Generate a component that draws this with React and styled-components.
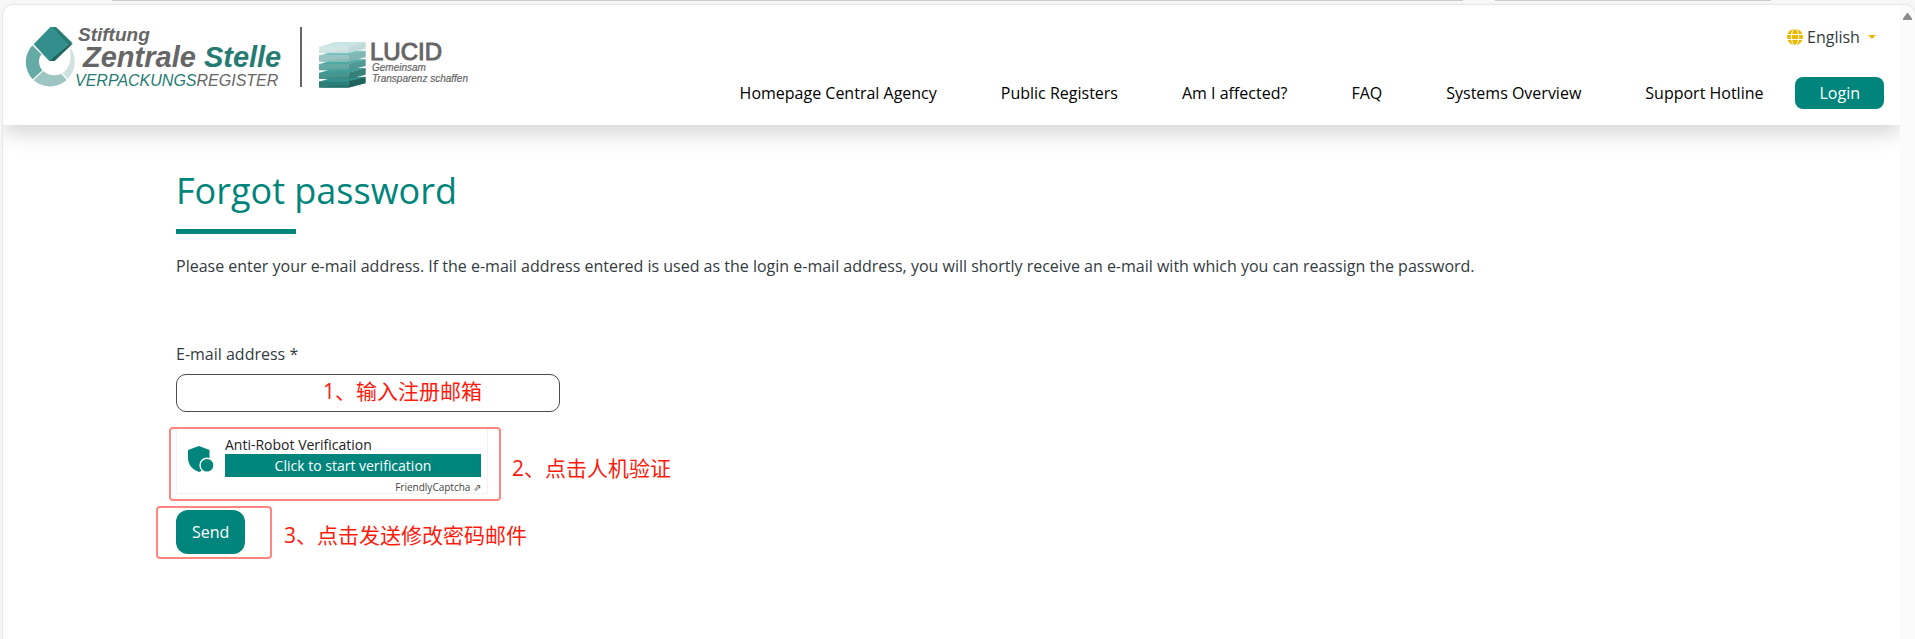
import React from "react";
import styled, { createGlobalStyle, ThemeProvider } from "styled-components";

const theme = {
  primary: "#00857c",
  accent: "#eab800",
  textPrimary: "#333b40",
  note: "#ff1a0c",
  frame: "#ff8680",
};

const GlobalStyle = createGlobalStyle`
  * {
    box-sizing: border-box;
  }
  body {
    margin: 0;
    background: #f7f7f7;
    color: ${theme.textPrimary};
    font-family: "Open Sans", "Noto Sans", sans-serif;
    font-size: 16px;
    line-height: 24px;
  }
  button, input, select {
    font: inherit;
  }
`;

const Window = styled.div`
  display: flex;
  flex-direction: column;
  min-height: 100vh;
  padding-left: 3px;
`;

const TabStrip = styled.div`
  display: flex;
  gap: 32px;
  height: 5px;
  padding: 0 144px 0 109px;
`;

const TabEdge = styled.span`
  flex: ${({ $grow }) => $grow};
  height: 1px;
  background: #cdcccd;
`;

const Sheet = styled.div`
  display: flex;
  flex: 1;
  overflow: hidden;
  background: #fff;
  border-radius: 10px 10px 0 0;
  box-shadow: 0 0 2px rgba(0, 0, 0, 0.25);
`;

const Page = styled.div`
  flex: 1;
  min-width: 0;
  overflow: hidden;
`;

const ScrollTrack = styled.div`
  flex: none;
  display: flex;
  justify-content: center;
  width: 15px;
  padding-top: 8px;
  background: #fbfbfb;
`;

const Header = styled.header`
  display: flex;
  justify-content: space-between;
  padding: 15px 16px 16px 21px;
  background: #fff;
  box-shadow: 0 8px 20px rgba(0, 0, 0, 0.17);
`;

const LogoLink = styled.a`
  display: block;
  svg {
    display: block;
  }
`;

const HeaderRight = styled.div`
  display: flex;
  flex-direction: column;
  align-items: flex-end;
  gap: 26px;
  padding-top: 3px;
`;

const Language = styled.label`
  display: flex;
  align-items: center;
  gap: 4px;
  height: 28px;
  padding-right: 8px;
`;

const LanguageSelect = styled.select`
  appearance: none;
  width: 57px;
  padding: 0;
  border: 0;
  background: none;
  color: ${({ theme }) => theme.textPrimary};
`;

const Nav = styled.nav`
  display: flex;
  align-items: center;
`;

const NavLink = styled.a`
  padding: 0 32px;
  color: #000;
  line-height: 32px;
  text-decoration: none;
  white-space: nowrap;
`;

const Button = styled.button`
  display: block;
  border: 0;
  padding: ${({ $large }) => ($large ? "10px 16px" : "4px 24px")};
  border-radius: ${({ $large }) => ($large ? "12px" : "8px")};
  background: ${({ theme }) => theme.primary};
  color: #fff;
  cursor: pointer;
`;

const Main = styled.main`
  padding: 40px 173px 0;
`;

const Title = styled.h1`
  margin: 0;
  color: ${({ theme }) => theme.primary};
  font-size: 36px;
  font-weight: 400;
  line-height: 52px;
  &::after {
    content: "";
    display: block;
    width: 120px;
    height: 5px;
    margin-top: 12px;
    background: ${({ theme }) => theme.primary};
  }
`;

const Intro = styled.p`
  margin: 20px 0 64px;
`;

const Form = styled.form`
  display: flex;
  flex-direction: column;
  align-items: flex-start;
`;

const Label = styled.label`
  margin-bottom: 8px;
`;

const Anchor = styled.div`
  position: relative;
  margin-bottom: 16px;
`;

const EmailInput = styled.input`
  display: block;
  width: 384px;
  height: 38px;
  padding: 0 12px;
  border: 1px solid #4c4c4c;
  border-radius: 10px;
  background: #fff;
`;

// Red outline drawn over the step it marks
const Frame = styled.span`
  position: absolute;
  inset: ${({ $inset }) => $inset};
  border: 2px solid ${({ theme }) => theme.frame};
  border-radius: 4px;
  pointer-events: none;
`;

const Note = styled.span`
  position: absolute;
  top: ${({ $top }) => $top};
  left: ${({ $left }) => $left};
  color: ${({ theme }) => theme.note};
  font-family: "Open Sans", "Noto Sans CJK SC", sans-serif;
  font-size: 21px;
  line-height: 28px;
  white-space: nowrap;
  pointer-events: none;
`;

const Captcha = styled.div`
  display: flex;
  width: 312px;
  height: 66px;
  padding: 7px 6px 0 11px;
  border: 1px solid #f2f2f2;
  background: #fff;
  > svg {
    margin-top: 10px;
  }
`;

const CaptchaBody = styled.div`
  flex: 1;
  margin-left: 11px;
  color: #222;
  font-size: 14px;
  line-height: 18px;
`;

const CaptchaButton = styled.button`
  display: block;
  width: 100%;
  height: 23px;
  padding: 0;
  border: 0;
  background: ${({ theme }) => theme.primary};
  color: #fff;
  line-height: 20px;
  cursor: pointer;
`;

const CaptchaLink = styled.a`
  display: block;
  margin-top: 3px;
  color: #444;
  font-size: 10px;
  line-height: 14px;
  text-align: right;
  text-decoration: none;
`;

const links = [
  "Homepage Central Agency",
  "Public Registers",
  "Am I affected?",
  "FAQ",
  "Systems Overview",
  "Support Hotline",
];

// bottom layer first, each one lies over the one below
const layers = [
  { y: 230, top: "#2f918b", front: "#2b7f79", side: "#1f635d" },
  { y: 204, top: "#3d9d98", front: "#46958f", side: "#357f79" },
  { y: 178, top: "#4fa9a5", front: "#66aaa6", side: "#4f9893" },
  { y: 152, top: "#79c1be", front: "#98c5c2", side: "#81b6b3" },
  { y: 126, top: "#c8e4e3", front: "#d1e6e5", side: "#c0dbd9" },
];

function Logo() {
  return (
    <svg width="448" height="69" viewBox="24 20 448 69" fontFamily="Liberation Sans, Arial, sans-serif" fontStyle="italic" fill="#666">
      <g transform="scale(0.33333)">
        <path d="M97 136A75 75 0 0 0 98 238L127 211A38 38 0 0 1 124 163Z" fill="#66aaa6" />
        <path d="M101 241A75 75 0 0 0 200 240L184 222A52 44 0 0 1 129 213Z" fill="#9cc5c3" />
        <path d="M203 237A75 75 0 0 0 212 144L209 152A62 62 0 0 1 187 220Z" fill="#cfe2e0" />
        <path d="M151 81H163L207 131L153 183H148L101 133Z" fill="#338f8b" />
        <path d="M157 81H168L218 130L206 134Z" fill="#257b72" />
        <path d="M206 133L218 131L164 183H149Z" fill="#1f645d" />
      </g>
      <text x="78" y="41" fontSize="19" fontWeight="700">Stiftung</text>
      <text x="83" y="67" fontSize="29" fontWeight="700">
        Zentrale <tspan fill="#257b72">Stelle</tspan>
      </text>
      <text x="75" y="86" fontSize="16">
        <tspan fill="#257b72">VERPACKUNGS</tspan>REGISTER
      </text>
      <rect x="300" y="27" width="2" height="60" />
      <g transform="translate(280 0) scale(0.33333)">
        {layers.map(({ y, top, front, side }) => (
          <g key={y}>
            <path d={`M117 ${y + 15}L165 ${y}H257L205 ${y + 15}Z`} fill={top} />
            <path d={`M117 ${y + 14}H205V${y + 33}H117Z`} fill={front} />
            <path d={`M205 ${y + 14}L257 ${y}V${y + 20}L205 ${y + 33}Z`} fill={side} />
            <path d={`M117 ${y + 33}L165 ${y + 26}H233L205 ${y + 33}Z`} fill={side} opacity="0.5" />
          </g>
        ))}
      </g>
      <text x="370" y="60" fontSize="24" fontStyle="normal" stroke="#666" strokeWidth="1">LUCID</text>
      <text x="372" y="71" fontSize="10" stroke="#666" strokeWidth="0.2">Gemeinsam</text>
      <text x="372" y="82" fontSize="10" stroke="#666" strokeWidth="0.2">Transparenz schaffen</text>
    </svg>
  );
}

function Globe() {
  return (
    <svg width="16" height="16" viewBox="0 0 16 16" aria-hidden="true">
      <circle cx="8" cy="8" r="8" fill={theme.accent} />
      <g fill="none" stroke="#fff">
        <path d="M0 5.5H16M0 10.5H16" />
        <ellipse cx="8" cy="8" rx="3.6" ry="8.3" />
      </g>
    </svg>
  );
}

function Shield() {
  return (
    <svg width="26" height="26" viewBox="0 0 26 26" aria-hidden="true">
      <path d="M11 0L21.5 4V12C21.5 19 17 24 11 26C5 24 0 19 0 12V4Z" fill={theme.primary} />
      <circle cx="19" cy="19.2" r="7" fill={theme.primary} stroke="#fff" strokeWidth="1.4" />
    </svg>
  );
}

export default function App() {
  return (
    <ThemeProvider theme={theme}>
      <GlobalStyle />
      <Window>
        <TabStrip>
          <TabEdge $grow={1351} />
          <TabEdge $grow={276} />
        </TabStrip>
        <Sheet>
          <Page>
            <Header>
              <LogoLink href="#" aria-label="LUCID">
                <Logo />
              </LogoLink>
              <HeaderRight>
                <Language>
                  <Globe />
                  <LanguageSelect defaultValue="en" aria-label="Language">
                    <option value="en">English</option>
                    <option value="de">Deutsch</option>
                  </LanguageSelect>
                  <svg width="8" height="4" viewBox="0 0 8 4" aria-hidden="true">
                    <path d="M0 0H8L4 4Z" fill={theme.accent} />
                  </svg>
                </Language>
                <Nav>
                  {links.map((text) => (
                    <NavLink href="#" key={text}>{text}</NavLink>
                  ))}
                  <Button type="button">Login</Button>
                </Nav>
              </HeaderRight>
            </Header>
            <Main>
              <Title>Forgot password</Title>
              <Intro>
                Please enter your e-mail address. If the e-mail address entered is used as the login e-mail address,
                you will shortly receive an e-mail with which you can reassign the password.
              </Intro>
              <Form onSubmit={(e) => e.preventDefault()}>
                <Label htmlFor="email">E-mail address *</Label>
                <Anchor>
                  <EmailInput id="email" type="email" required />
                  <Note $left="147px" $top="3px">1、输入注册邮箱</Note>
                </Anchor>
                <Anchor>
                  <Captcha>
                    <Shield />
                    <CaptchaBody>
                      Anti-Robot Verification
                      <CaptchaButton type="button">Click to start verification</CaptchaButton>
                      <CaptchaLink href="#">FriendlyCaptcha ⇗</CaptchaLink>
                    </CaptchaBody>
                  </Captcha>
                  <Frame $inset="-1px -13px -7px -7px" />
                  <Note $left="336px" $top="26px">2、点击人机验证</Note>
                </Anchor>
                <Anchor>
                  <Button type="submit" $large>Send</Button>
                  <Frame $inset="-4px -27px -5px -20px" />
                  <Note $left="108px" $top="11px">3、点击发送修改密码邮件</Note>
                </Anchor>
              </Form>
            </Main>
          </Page>
          <ScrollTrack>
            <svg width="9" height="7" viewBox="0 0 9 7" aria-hidden="true">
              <path d="M4 0H5L9 5.5V7H0V5.5Z" fill="#8b8b8b" />
            </svg>
          </ScrollTrack>
        </Sheet>
      </Window>
    </ThemeProvider>
  );
}
